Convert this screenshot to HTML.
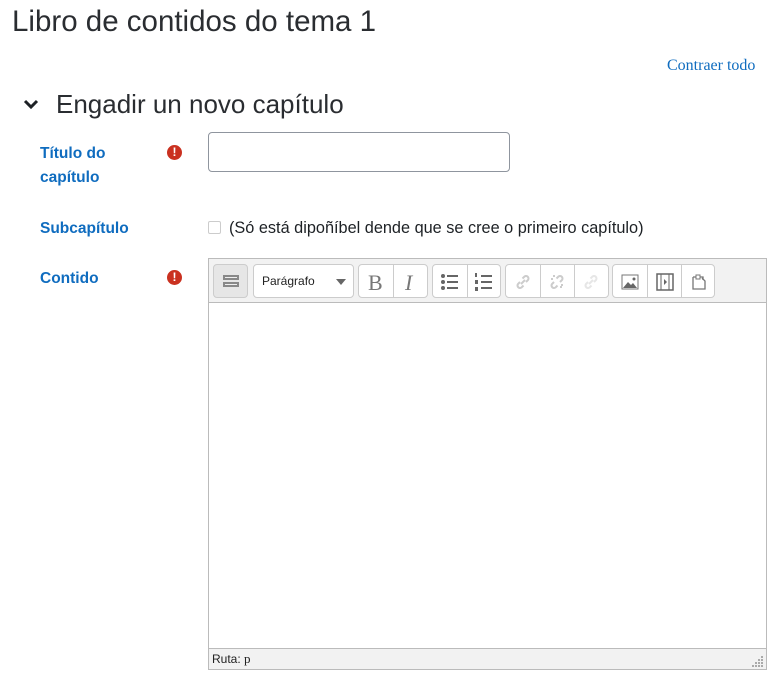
<!DOCTYPE html>
<html><head><meta charset="utf-8"><style>
body{margin:0;background:#fff;font-family:"Liberation Sans",sans-serif;color:#373a3c;width:779px;height:680px;overflow:hidden;position:relative}
.a{position:absolute}
h1{position:absolute;left:12px;top:5px;margin:0;font-weight:normal;font-size:29.5px;color:#2a2d31}
.lbl{position:absolute;left:40px;color:#0f6cbf;font-weight:bold;font-size:15.5px;line-height:24px}
.req{position:absolute;width:15px;height:15px;border-radius:50%;background:#ca3120;color:#fff;font-size:12px;font-weight:bold;text-align:center;line-height:15px}
.btn{position:absolute;top:264px;height:34px;border:1px solid #ccc;border-radius:4px;background:#fff;box-sizing:border-box}
.sep{position:absolute;top:0;bottom:0;width:1px;background:#ccc}
</style></head><body>
<h1>Libro de contidos do tema 1</h1>
<div class="a" style="left:667px;top:57px;font-family:'Liberation Serif',serif;font-size:16px;color:#0f6cbf">Contraer todo</div>
<svg class="a" style="left:23px;top:98px" width="16" height="12" viewBox="0 0 16 12"><path d="M2 3l6 6 6-6" stroke="#1d2125" stroke-width="3" fill="none"/></svg>
<div class="a" style="left:56px;top:89px;font-size:26px;color:#2a2d31">Engadir un novo capítulo</div>
<div class="lbl" style="top:142px">Título do<br>capítulo</div>
<div class="req" style="left:167px;top:145px">!</div>
<div class="a" style="left:208px;top:132px;width:302px;height:40px;border:1px solid #8f959e;border-radius:4px;box-sizing:border-box"></div>
<div class="lbl" style="top:217px">Subcapítulo</div>
<div class="a" style="left:208px;top:221px;width:11px;height:11px;border:1px solid #ccc;border-radius:2px"></div>
<div class="a" style="left:229px;top:219px;font-size:16.3px;color:#1d2125">(Só está dipoñíbel dende que se cree o primeiro capítulo)</div>
<div class="lbl" style="top:267px">Contido</div>
<div class="req" style="left:167px;top:270px">!</div>
<div class="a" style="left:208px;top:258px;width:559px;height:412px;border:1px solid #bbb;box-sizing:border-box"></div>
<div class="a" style="left:209px;top:259px;width:557px;height:43px;background:#f2f2f2;border-bottom:1px solid #bbb"></div>
<div class="a" style="left:209px;top:648px;width:557px;height:21px;box-sizing:border-box;background:#f2f2f2;border-top:1px solid #bbb;font-size:12px;line-height:20px;padding-left:3px;color:#222">Ruta: <span style="font-family:'Liberation Serif',serif;font-size:13px">p</span></div>
<div class="btn" style="left:213px;width:35px;background:#e6e6e6">
<svg class="a" style="left:8px;top:8px" width="18" height="16"><g fill="#888"><rect x="1" y="2" width="16" height="5"/><rect x="1" y="9" width="16" height="5"/></g><g fill="#eee"><rect x="3" y="4" width="12" height="1"/><rect x="3" y="11" width="12" height="1"/></g></svg></div>
<div class="btn" style="left:253px;width:101px"><span class="a" style="left:8px;top:9px;font-size:12px;color:#222">Parágrafo</span><svg class="a" style="left:82px;top:14px" width="10" height="6"><path d="M0 0h10L5 6z" fill="#666"/></svg></div>
<div class="btn" style="left:358px;width:70px"><span class="a" style="left:9px;top:5px;font-family:'Liberation Serif',serif;font-size:22px;color:#777">B</span><div class="sep" style="left:34px"></div><span class="a" style="left:46px;top:5px;font-family:'Liberation Serif',serif;font-style:italic;font-size:22px;color:#777">I</span></div>
<div class="btn" style="left:432px;width:69px">
<svg class="a" style="left:7px;top:8px" width="20" height="18" fill="#666"><circle cx="3" cy="3" r="2"/><circle cx="3" cy="9" r="2"/><circle cx="3" cy="15" r="2"/><rect x="7" y="2" width="11" height="2"/><rect x="7" y="8" width="11" height="2"/><rect x="7" y="14" width="11" height="2"/></svg>
<div class="sep" style="left:34px"></div>
<svg class="a" style="left:41px;top:7px" width="20" height="20" fill="#666"><rect x="1" y="1" width="2" height="4"/><rect x="1" y="8" width="3" height="4"/><rect x="1" y="15" width="3" height="4"/><rect x="7" y="3" width="11" height="2"/><rect x="7" y="9" width="11" height="2"/><rect x="7" y="15" width="11" height="2"/></svg></div>
<div class="btn" style="left:505px;width:104px">
<svg class="a" style="left:9px;top:9px" width="16" height="16"><path d="M6 10l4-4M5 8l-2 2a2.5 2.5 0 003.5 3.5l2-2M11 8l2-2a2.5 2.5 0 00-3.5-3.5l-2 2" stroke="#ccc" stroke-width="2" fill="none"/></svg>
<div class="sep" style="left:34px"></div>
<svg class="a" style="left:43px;top:9px" width="16" height="16"><path d="M5 8l-2 2a2.5 2.5 0 003.5 3.5l2-2M11 8l2-2a2.5 2.5 0 00-3.5-3.5l-2 2M2 5h2M5 1v2M12 14v-2M14 11h-2" stroke="#ccc" stroke-width="2" fill="none"/></svg>
<div class="sep" style="left:68px"></div>
<svg class="a" style="left:77px;top:9px" width="16" height="16"><path d="M6 10l4-4M5 8l-2 2a2.5 2.5 0 003.5 3.5l2-2M11 8l2-2a2.5 2.5 0 00-3.5-3.5l-2 2" stroke="#e6e6e6" stroke-width="2" fill="none"/></svg></div>
<div class="btn" style="left:612px;width:103px">
<svg class="a" style="left:8px;top:9px" width="18" height="16"><rect x="1" y="1" width="16" height="14" fill="none" stroke="#777"/><path d="M2 14l5-6 3 3 2-2 4 5z" fill="#666"/><circle cx="13" cy="5" r="1.5" fill="#666"/></svg>
<div class="sep" style="left:34px"></div>
<svg class="a" style="left:43px;top:8px" width="18" height="18"><rect x="1" y="1" width="16" height="16" fill="none" stroke="#666" stroke-width="1.5"/><rect x="5" y="1" width="8" height="16" fill="none" stroke="#666"/><path d="M8 6l3 3-3 3z" fill="#666"/></svg>
<div class="sep" style="left:68px"></div>
<svg class="a" style="left:77px;top:8px" width="18" height="18"><path d="M3 4h3M10 4h3v3M3 4v12h12V8l-3-3" stroke="#777" stroke-width="1.3" fill="none"/><rect x="6" y="2" width="4" height="4" fill="none" stroke="#777"/></svg></div>
<svg class="a" style="left:752px;top:656px" width="12" height="12" fill="#aaa"><rect x="9" y="0" width="2" height="2"/><rect x="6" y="3" width="2" height="2"/><rect x="9" y="3" width="2" height="2"/><rect x="3" y="6" width="2" height="2"/><rect x="6" y="6" width="2" height="2"/><rect x="9" y="6" width="2" height="2"/><rect x="0" y="9" width="2" height="2"/><rect x="3" y="9" width="2" height="2"/><rect x="6" y="9" width="2" height="2"/><rect x="9" y="9" width="2" height="2"/></svg>
</body></html>
